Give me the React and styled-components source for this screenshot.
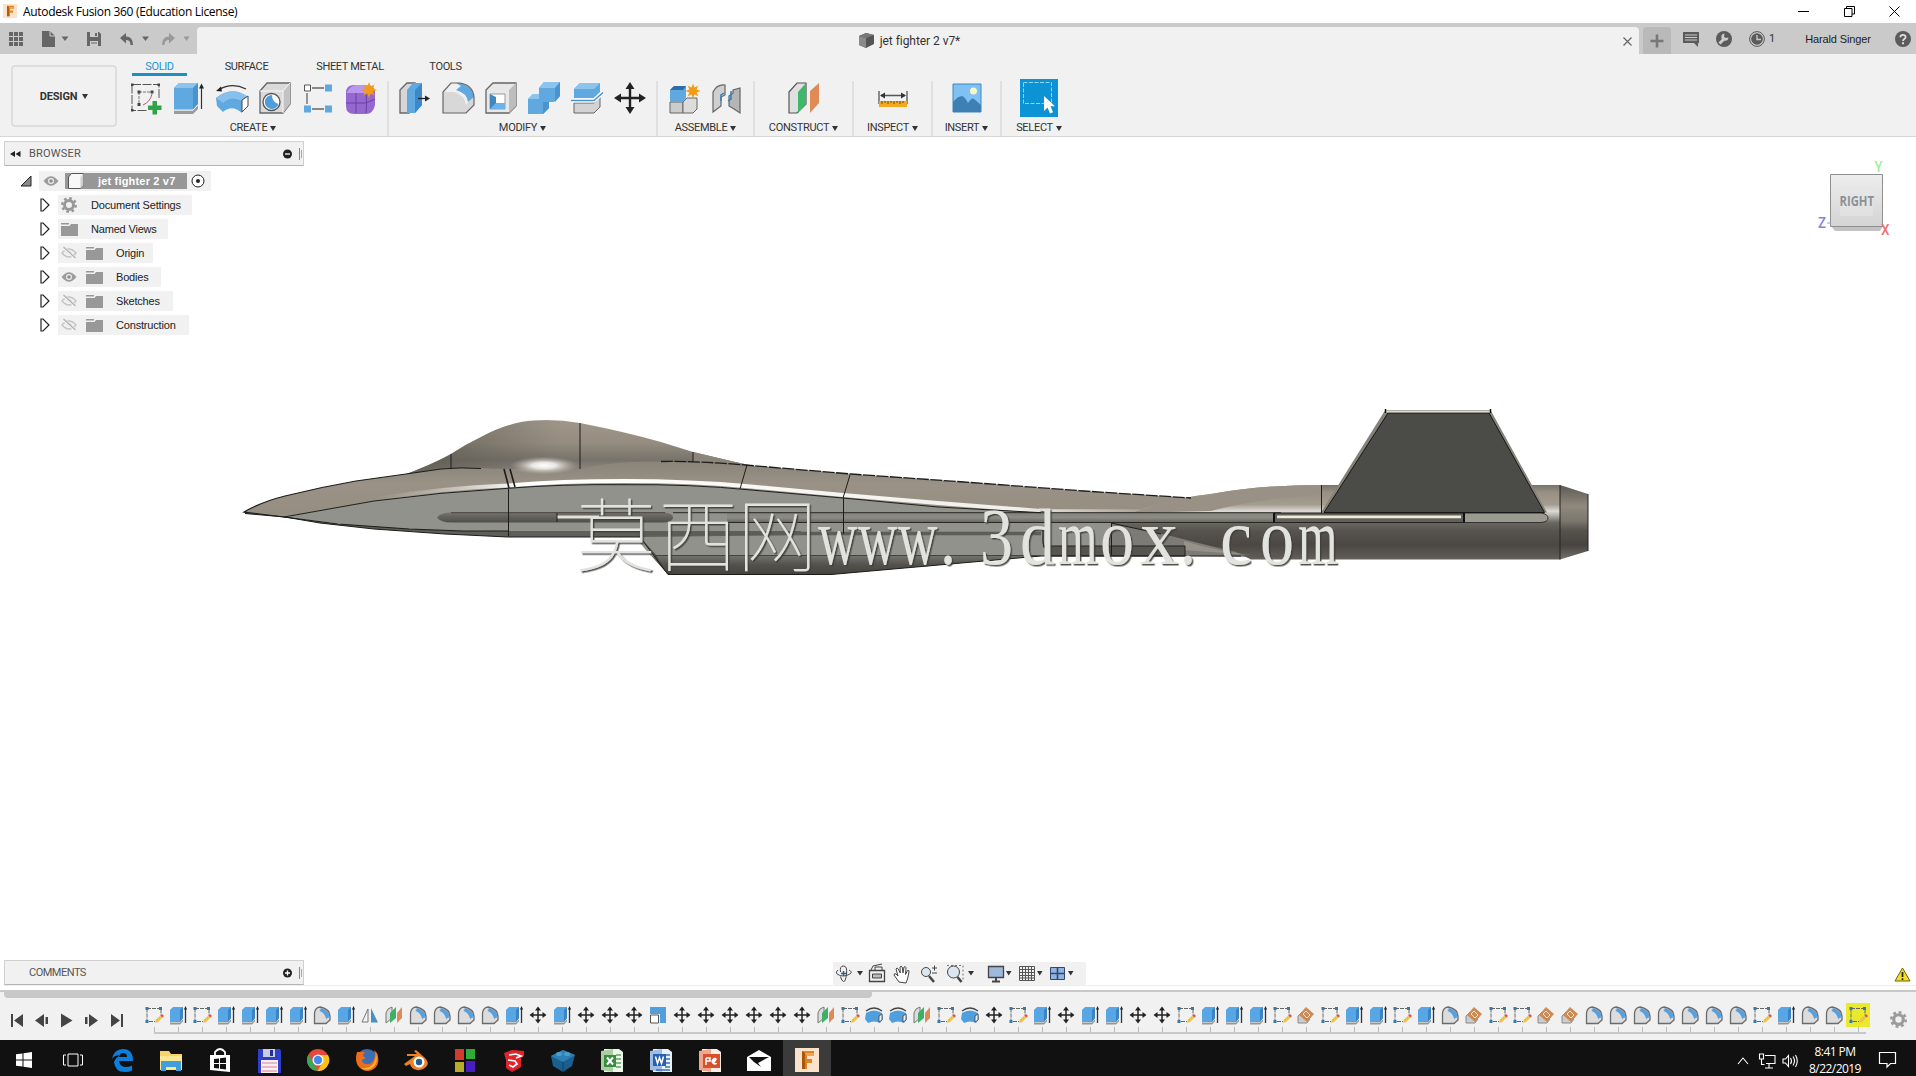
import React from 'react';
import styled, { createGlobalStyle } from 'styled-components';

const GlobalStyle = createGlobalStyle`
  * {
    box-sizing: border-box;
  }
  body {
    margin: 0;
    background: #fff;
    overflow: hidden;
    font-family: Roboto, 'Liberation Sans', sans-serif;
    font-size: 11px;
    color: #333;
  }
  svg {
    display: block;
    flex: none;
    overflow: visible;
  }
`;

/* ---------- ribbon icons, 32 x 32 ---------- */

const Burst = ({ x, y, s = 1 }) => (
  <path
    transform={`translate(${x} ${y}) scale(${s})`}
    d="M0-8 1.6-3.6 5.6-5.6 3.8-1.6 8 0 3.8 1.6 5.6 5.6 1.6 3.6 0 8-1.6 3.6-5.6 5.6-3.8 1.6-8 0-3.8-1.6-5.6-5.6-1.6-3.6Z"
    fill="#f49c14"
  />
);

const ribbonIcons = {
  sketch: (
    <>
      <path d="M2 2.5h27v14M2 2.5v26h16" fill="none" stroke="#555" strokeDasharray="9 1.5" />
      <path d="M9 10h11M9 10v12" fill="none" stroke="#777" strokeDasharray="3 1" />
      <path d="M22 12q-2 8-9 11" fill="none" stroke="#b05c70" />
      <path
        d="M1 1.5h2.5v2.5H1zM27.5 1.5h2.5v2.5h-2.5zM1 27h2.5v2.5H1zM7.5 8.500h3v3h-3zM20.5 8.500h3v3h-3zM7.500 21h3v3h-3z"
        fill="#444"
      />
      <path d="M22.500 19h4.500v4.500h4.500V28H27v4.500h-4.500V28H18v-4.500h4.500z" fill="#2fa347" />
    </>
  ),
  extrude: (
    <>
      <path d="M1 6 6 1h19v21l-5 6H1z" fill="#5fa8e0" />
      <path d="M1 6 6 1h19l-5 5z" fill="#8cc4ee" />
      <path d="M20 6l5-5v21l-5 6z" fill="#4b93cf" />
      <path d="M1 28.500h19l5-5.500v4l-5 5H1z" fill="#9a9a9f" />
      <path d="M1 28h19l5-5.500" fill="none" stroke="#f4f4f4" />
      <path d="M28.500 5v22" stroke="#333" strokeWidth="1.200" />
      <path d="M28.500 1.500l2.500 5h-5z" fill="#222" />
    </>
  ),
  revolve: (
    <>
      <path d="M0 16Q16 3 32 15l-6 8v8Q16 22 7 30L1 24z" fill="#5fa8e0" />
      <path d="M0 16Q16 3 32 15l-6 4Q15 13 7 21z" fill="#86c0ed" />
      <path d="M26 18l6-4v10l-6 6z" fill="#fff" stroke="#444" />
      <path d="M3 7.500Q16 0 30 7" fill="none" stroke="#333" strokeWidth="1.300" />
      <path d="M0 9 5 4.500l1 5z" fill="#222" />
    </>
  ),
  hole: (
    <>
      <path d="M1 9 8 1h23v21l-7 9H1z" fill="#dadada" stroke="#666" strokeWidth="1.300" />
      <path d="M24 9l7-8v21l-7 9z" fill="#c3c3c3" />
      <path d="M1 9h23l7-8M24 9v22" fill="none" stroke="#f8f8f8" />
      <circle cx="12.500" cy="20" r="8.500" fill="#fff" stroke="#555" strokeWidth="1.300" />
      <path d="M13 13a7 7 0 1 0 6.500 9Q13 20 13 13" fill="#4f9ddb" />
    </>
  ),
  pattern: (
    <>
      <path d="M10 6h12M5 11v11M10 27h12" stroke="#666" strokeWidth="1.300" />
      <path d="M2.500 3h6v6h-6z" fill="#fff" stroke="#555" />
      <path d="M23 2.500h7v7h-7zM2 23.500h7v7H2zM23 23.500h7v7h-7z" fill="#5fa8e0" />
    </>
  ),
  form: (
    <>
      <path d="M1 11q0-8 8-8h13q8 0 8 8v12q-2 9-9 9H9q-8 0-8-8z" fill="#9468cf" />
      <path d="M2 10q3-6 9-7h13l-3 8H2z" fill="#bb95ee" />
      <path d="M11 11v20M1 21h20M21 11q1 12 0 20M21 21l9-4" fill="none" stroke="#6a41a6" />
      <Burst x={24} y={8} />
    </>
  ),
  pressPull: (
    <>
      <path d="M1 8 8 1h8v23l-6 7H1z" fill="#d6d6d6" stroke="#666" strokeWidth="1.300" />
      <path d="M8 8l6-7h9v22l-7 8H8z" fill="#5fa8e0" />
      <path d="M16 8l7-7v22l-7 8z" fill="#3d88c8" />
      <path d="M19 16.500h8" stroke="#222" strokeWidth="1.300" />
      <path d="M31 16.500l-5-3v6z" fill="#222" />
    </>
  ),
  fillet: (
    <>
      <path d="M1 10 9 1h9q13 2 14 14v8l-8 8H1z" fill="#d8d8d8" />
      <path d="M24 23q-1-10-12-13H1l8-9h7q14 3 15 13z" fill="#f0f0f0" />
      <path d="M14 1h4q12 2 14 14l-6 5q-1-9-12-12l5-4z" fill="#5fa8e0" />
      <path d="M1 31V10l8-9h9q13 2 14 14v8l-8 8z" fill="none" stroke="#666" strokeWidth="1.200" />
    </>
  ),
  shell: (
    <>
      <path d="M1 8 8 1h23v23l-7 7H1z" fill="#e8e8e8" stroke="#666" strokeWidth="1.300" />
      <path d="M24 8l7-7v23l-7 7z" fill="#bdbdbd" />
      <path d="M5 12h15v15H5z" fill="#fff" stroke="#999" />
      <path d="M5 12l6 3v6h9v6H5z" fill="#4287bd" />
      <path d="M5 27l6-6h9v6z" fill="#6db2e8" />
    </>
  ),
  combine: (
    <>
      <path d="M0 17l5-5h6V6l5-6h16v14l-6 6h-5v6l-6 6H0z" fill="#5fa8e0" />
      <path d="M0 17l5-5h6v5zM11 6l5-6h16l-5 6z" fill="#8cc4ee" />
      <path d="M27 6l5-6v14l-5 6z" fill="#4b93cf" />
      <path d="M15 20h6v6l-6 6z" fill="#4b93cf" />
    </>
  ),
  split: (
    <>
      <path d="M3 7l6-6h20v9l-6 6H3z" fill="#5fa8e0" />
      <path d="M3 7l6-6h20l-6 6z" fill="#8cc4ee" />
      <path d="M3 21h20l6-6v10l-6 6H3z" fill="#d3d3d3" stroke="#666" />
      <path d="M0 18.500h23l9-8" fill="none" stroke="#fff" strokeWidth="4" />
      <path d="M0 18.500h23l9-8" fill="none" stroke="#4a92cc" strokeWidth="1.500" />
    </>
  ),
  move: (
    <>
      <path d="M16 5v22M5 16h22" stroke="#222" strokeWidth="2.400" />
      <path d="M16 0l4.500 7h-9zM16 32l4.500-7h-9zM0 16l7-4.500v9zM32 16l-7-4.500v9z" fill="#222" />
    </>
  ),
  component: (
    <>
      <path d="M2 20h13v11H2z" fill="#ccc" stroke="#666" />
      <path d="M15 20l4-4h10v11l-4 4H15z" fill="#dcdcdc" stroke="#666" />
      <path d="M2 8l4-4h12v12l-3 4H2z" fill="#5fa8e0" />
      <path d="M2 8l4-4h12l-3 4z" fill="#2f6fa6" />
      <Burst x={25} y={9} s={0.95} />
    </>
  ),
  joint: (
    <>
      <path d="M2 10q4-8 12-7v10l-4 2v9l-8 6z" fill="#cfcfcf" stroke="#666" strokeWidth="1.200" />
      <path d="M18 14l4-3V8l7-2v25l-6-4-5-3z" fill="#b5b5b5" stroke="#666" strokeWidth="1.200" />
      <path d="M10 19v-6l3-2M20 9v8l-3 2" fill="none" stroke="#2f7fc2" strokeWidth="1.500" />
    </>
  ),
  construct: (
    <>
      <path d="M1 10 9 1h9v21l-9 9H1z" fill="#e0e0e0" stroke="#555" strokeWidth="1.200" />
      <path d="M10 10l8-9v21l-8 9z" fill="#3fb869" />
      <path d="M22 9l9-8v20l-9 10z" fill="#e08a55" />
    </>
  ),
  inspect: (
    <>
      <path d="M2 9v13M30 9v13M4 13.500h24" stroke="#555" strokeWidth="1.300" />
      <path d="M3 13.500l5-3v6zM29 13.500l-5-3v6z" fill="#333" />
      <path d="M2 19h28v6H2z" fill="#f2aa1c" />
      <path d="M5 19v3M8 19v2M11 19v3M14 19v2M17 19v3M20 19v2M23 19v3M26 19v2" stroke="#6b4a0a" />
    </>
  ),
  insert: (
    <>
      <path d="M2 2h28v28H2z" fill="#7fc1f3" stroke="#3e88c4" />
      <path d="M2 20q5-6 9-6 3 1 6 7 4-6 6-4l7 6v7H2z" fill="#3e7fb4" />
      <circle cx="22.500" cy="9" r="3.500" fill="#fbf6c8" />
    </>
  ),
};

const RibbonIcon = ({ name }) => (
  <svg width="32" height="32" viewBox="0 0 32 32">
    {ribbonIcons[name]}
  </svg>
);

/* ---------- timeline icons, 20 x 20 ---------- */

const timelineIcons = {
  sketch: (
    <>
      <path d="M3 3.500h14v7M3 3.500v13h8" fill="none" stroke="#666" strokeDasharray="4 1" />
      <path d="M1.500 2h3v3h-3zM15 2h3v3h-3zM1.500 15h3v3h-3z" fill="#3a76a8" />
      <path d="M11 18l1-3.500 5-4.500 2 2-5 5z" fill="#f2bf4b" />
      <path d="M16.500 10.500l1.500-1.500 2 2-1.500 1.500z" fill="#d9534f" />
    </>
  ),
  extrude: (
    <>
      <path d="M2 5l3-3h10v11l-3 4H2z" fill="#58a6e4" />
      <path d="M12 5l3-3v11l-3 4z" fill="#3b84c4" />
      <path d="M2 17.500h10l3-3v2l-3 3H2z" fill="#999" />
      <path d="M17.500 3v15" stroke="#333" strokeWidth="1.300" />
      <path d="M17.500 1l1.500 3.500h-3z" fill="#222" />
    </>
  ),
  fillet: (
    <>
      <path d="M2.500 8q1-6 6-6 9 2 9.500 9v4l-4 3.500H2.500z" fill="#dcdcdc" stroke="#6b6b6b" strokeWidth="1.300" />
      <path d="M9 3q8 2 8.500 9l-3.500 2q-1-6-6.500-8z" fill="#58a0dc" />
    </>
  ),
  mirror: (
    <>
      <path d="M8 4v13H2z" fill="#f3f3f3" stroke="#777" />
      <path d="M11 3l7 14.500h-7z" fill="#4a8fc6" />
    </>
  ),
  plane: (
    <>
      <path d="M2 18V8q1-5 6-6v11z" fill="#ddd" stroke="#777" />
      <path d="M6 18V8l6-6v11z" fill="#3fae66" />
      <path d="M13 18V8l5-6v11z" fill="#de8a5a" />
    </>
  ),
  revolve: (
    <>
      <path d="M2 8q8-5 16 0l1 6-3 4q-6-3-12 0l-3-4z" fill="#4f9fde" />
      <path d="M2 6q8-6 16 0" fill="none" stroke="#444" strokeWidth="1.300" />
      <path d="M15 11l3-2v6l-3 2z" fill="#fff" stroke="#555" />
    </>
  ),
  move: (
    <>
      <path d="M10 4v12M4 10h12" stroke="#222" strokeWidth="1.500" />
      <path d="M10 1.500l3 4H7zM10 18.500l3-4H7zM1.500 10l4-3v6zM18.500 10l-4-3v6z" fill="#222" />
    </>
  ),
  scale: (
    <>
      <path d="M2 2h16v16h-6V9H2z" fill="#4f9fde" />
      <path d="M2.500 10h8v8h-8z" fill="#fff" stroke="#555" />
    </>
  ),
  thread: (
    <>
      <path d="M2 18v-7l4-4 8 7-3 4z" fill="#ccc" stroke="#888" />
      <path d="M3 10l7-8 8 7-7 8z" fill="#cf8a54" />
      <path d="M7 9l3-3 4 4-3 3z" fill="none" stroke="#fbe5cf" />
    </>
  ),
};

const TimelineGlyph = ({ name }) => (
  <svg width="20" height="20" viewBox="0 0 20 20">
    {timelineIcons[name]}
  </svg>
);

const S = 'sketch';
const E = 'extrude';
const F = 'fillet';
const M = 'move';
const P = 'plane';
const R = 'revolve';
const T = 'thread';

const history = [
  S, E, S, E, E, E, E, F, E, 'mirror', P, F, F, F, F, E, M, E, M, M, M,
  'scale', M, M, M, M, M, M, P, S, R, R, P, S, R, M, S, E, M, E, E, M, M,
  S, E, E, E, S, T, S, E, E, S, E, F, T, S, S, T, T, F, F, F, F, F, F, F,
  S, E, F, F, S,
];

const ribbonGroups = [
  { label: 'CREATE', width: 270, icons: ['sketch', 'extrude', 'revolve', 'hole', 'pattern', 'form'] },
  { label: 'MODIFY', width: 269, icons: ['pressPull', 'fillet', 'shell', 'combine', 'split', 'move'] },
  { label: 'ASSEMBLE', width: 97, icons: ['component', 'joint'] },
  { label: 'CONSTRUCT', width: 99, icons: ['construct'] },
  { label: 'INSPECT', width: 79, icons: ['inspect'] },
  { label: 'INSERT', width: 69, icons: ['insert'] },
  { label: 'SELECT', width: 74, icons: [] },
];

const treeItems = [
  { label: 'Document Settings', icon: 'gear', width: 134 },
  { label: 'Named Views', icon: 'folder', width: 110 },
  { label: 'Origin', icon: 'folder', eye: 'off', width: 95 },
  { label: 'Bodies', icon: 'folder', eye: 'on', width: 103 },
  { label: 'Sketches', icon: 'folder', eye: 'off', width: 115 },
  { label: 'Construction', icon: 'folder', eye: 'off', width: 131 },
];

/* ---------- small glyphs ---------- */

const FusionLogo = ({ size }) => (
  <svg width={size} height={size} viewBox="0 0 24 24">
    <path d="M0 0h24v24H0z" fill="#fbe3cb" />
    <path d="M7 3h12v5h-7v3h5v4h-5v6H7z" fill="#dd8425" />
    <path d="M7 3l3 2v16H7z" fill="#a9570f" />
    <path d="M10 5h9v3h-7z" fill="#f2a44d" />
  </svg>
);

const Gear = ({ size, color }) => (
  <svg width={size} height={size} viewBox="-8 -8 16 16">
    <circle r="4.500" fill="none" stroke={color} strokeWidth="3" />
    <circle r="6.800" fill="none" stroke={color} strokeWidth="2.400" strokeDasharray="2.670 2.670" />
  </svg>
);

const Eye = ({ off }) => (
  <svg width="16" height="12" viewBox="0 0 16 12">
    {off ? (
      <>
        <path d="M1 6q7-8 14 0-7 8-14 0z" fill="none" stroke="#c4c4c4" strokeWidth="1.500" />
        <path d="M6 6q2-3 4 0" fill="none" stroke="#bbb" strokeWidth="1.500" />
        <path d="M2 0l12 11" stroke="#f1f1f1" strokeWidth="3" />
        <path d="M2.500 0l12 11" stroke="#b0b0b0" strokeWidth="1.200" />
      </>
    ) : (
      <>
        <path d="M.5 6q7.500-9.500 15 0-7.500 9.500-15 0z" fill="#9c9c9c" />
        <circle cx="8" cy="6" r="3" fill="#eee" />
        <circle cx="8" cy="6" r="1.800" fill="#8c8c8c" />
      </>
    )}
  </svg>
);

const Folder = () => (
  <svg width="17" height="13" viewBox="0 0 17 13">
    <path d="M0 0h8v1.500H0zM0 3h8.500L10 1h7v12H0z" fill="#989898" />
  </svg>
);

/* ---------- jet ---------- */

const cells = ['w', 'w', 'w', '.', '3', 'd', 'm', 'o', 'x', '.', 'c', 'o', 'm'];
const cellWidth = { '.': 16, 3: 33, d: 35, o: 34, c: 32, x: 38, w: 39.500, m: 39.500 };

const Watermark = () => (
  <g fill="#e2e2de" filter="url(#emboss)">
    <g fontFamily="'Noto Sans CJK SC', sans-serif" fontWeight="100" fontSize="80">
      <text x="575" y="565">莫</text>
      <text x="657" y="565">西</text>
      <text x="736" y="565">网</text>
    </g>
    <g fontFamily="'Liberation Serif', serif" fontSize="80">
      {cells.map((c, i) => (
        <text
          key={i}
          x={818 + i * 40 + (c === 'w' || c === 'm' ? -1 : 1)}
          y="564"
          textLength={cellWidth[c]}
          lengthAdjust="spacingAndGlyphs"
        >
          {c}
        </text>
      ))}
    </g>
  </g>
);

const stops = (list) => list.map(([o, c]) => <stop key={o} offset={o} stopColor={c} />);

const Jet = () => (
  <JetCanvas viewBox="230 390 1380 200" width="1380" height="200">
    <defs>
      <filter id="emboss" x="-2%" y="-10%" width="104%" height="125%">
        <feDropShadow dx="1.500" dy="1.500" stdDeviation="0.300" floodColor="#3c3c3a" floodOpacity=".9" />
      </filter>
      <linearGradient id="top" x1="0" y1="465" x2="0" y2="512" gradientUnits="userSpaceOnUse">
        {stops([[0, '#8b857a'], [0.4, '#9a9286'], [1, '#958e81']])}
      </linearGradient>
      <linearGradient id="canopy" x1="0" y1="420" x2="0" y2="470" gradientUnits="userSpaceOnUse">
        {stops([[0, '#a0978a'], [0.45, '#958d80'], [0.8, '#77736b'], [1, '#8c877e']])}
      </linearGradient>
      <linearGradient id="canopyEdge" x1="400" y1="0" x2="560" y2="0" gradientUnits="userSpaceOnUse">
        <stop offset="0" stopColor="#59564f" stopOpacity=".8" />
        <stop offset="1" stopColor="#59564f" stopOpacity="0" />
      </linearGradient>
      <radialGradient id="glow">
        <stop offset="0" stopColor="#fff" />
        <stop offset=".35" stopColor="#f4f3f0" stopOpacity=".9" />
        <stop offset="1" stopColor="#bbb5a8" stopOpacity="0" />
      </radialGradient>
      <linearGradient id="belly" x1="0" y1="555" x2="0" y2="575" gradientUnits="userSpaceOnUse">
        {stops([[0, '#77756f'], [0.5, '#53514b'], [1, '#45433e']])}
      </linearGradient>
      <linearGradient id="tube" x1="0" y1="485" x2="0" y2="560" gradientUnits="userSpaceOnUse">
        {stops([[0, '#78746b'], [0.1, '#989083'], [0.26, '#a39c90'], [0.35, '#dddbd6'], [0.42, '#aaa7a0'], [0.5, '#6a6761'], [0.62, '#56534e'], [0.8, '#4b4843'], [0.95, '#5c5954'], [1, '#67645e']])}
      </linearGradient>
      <linearGradient id="nozzle" x1="0" y1="485" x2="0" y2="560" gradientUnits="userSpaceOnUse">
        {stops([[0, '#5d5a53'], [0.28, '#8f897d'], [0.48, '#7b776e'], [0.6, '#57544e'], [0.8, '#464440'], [1, '#77736b']])}
      </linearGradient>
      <linearGradient id="wing" x1="0" y1="512" x2="0" y2="523" gradientUnits="userSpaceOnUse">
        {stops([[0, '#84837c'], [0.5, '#8c8b84'], [1, '#62615b']])}
      </linearGradient>
      <linearGradient id="rail" x1="0" y1="512" x2="0" y2="523" gradientUnits="userSpaceOnUse">
        {stops([[0, '#78776f'], [0.4, '#65645d'], [1, '#4d4c47']])}
      </linearGradient>
      <linearGradient id="gleam" x1="375" y1="0" x2="1180" y2="0" gradientUnits="userSpaceOnUse">
        <stop offset="0" stopColor="#d8d5cd" stopOpacity="0" />
        <stop offset=".18" stopColor="#fff" />
        <stop offset=".8" stopColor="#f0efeb" />
        <stop offset="1" stopColor="#e0ddd6" stopOpacity="0" />
      </linearGradient>
    </defs>

    {/* canopy */}
    <path
      d="M400 476Q430 465 450 454 465 444 480 437 508 422 533 420.500 556 419 579 423 625 432 660 442L692 452 730 461 750 465.500 750 480 400 480z"
      fill="url(#canopy)"
    />
    <path d="M400 476Q430 465 450 454 465 444 480 437 508 422 533 420.500L560 421V478H400z" fill="url(#canopyEdge)" />
    <path d="M692 452l38 9 20 4.500V470l-58-3z" fill="#8b857b" />

    {/* upper fuselage */}
    <path
      d="M243 512Q260 502 284 496 320 487 355 481L405 474 440 469 Q470 467 500 469L579 470 Q600 463 630 462 680 461 750 465.500L850 474 963 482 1083 491 1190 498 1190 513H1040L937 507 842 498 750 490Q690 484 623 484.700 560 484 507 488.300 440 492 373 501L283 517z"
      fill="url(#top)"
    />
    <ellipse cx="543" cy="465.500" rx="34" ry="9" fill="url(#glow)" />
    <path d="M375 499Q440 488 507 485.500 560 481 623 481 690 481 750 486.500L842 495 937 503 1040 511 1180 511.500" fill="none" stroke="url(#gleam)" strokeWidth="4" />

    {/* side panel */}
    <path
      d="M283 517L373 501Q440 492 507 488.300 560 484 623 484.700 690 484 750 490L842 498 937 507 1040 512.700H1190V556H1040L983 561 830 574.500H667L639 543V537H507L373 528z"
      fill="#92928c"
    />
    <path d="M243 512L283 517 337 524 408 529 462 531H800V537H507L444 534 373 529 319 523 284 517 244 513.500z" fill="#5f5e58" />
    <path d="M639 543L667 574.500H830L983 561 1040 556H650z" fill="url(#belly)" />
    <path d="M639 537l12 18H1040v-20H800z" fill="#92928c" />
    <path d="M639 537L655 555 667 574.500z" fill="#494843" />
    <path d="M634 533.500H1040" stroke="#5d5c57" strokeWidth="3.500" />

    {/* engine body */}
    <path d="M1110 523H1260V557L1183 556H1110z" fill="#7d7b75" />
    <path d="M1130 513Q1170 498 1210 494 1260 485 1320 485H1559V559.500H1250L1235 552Q1205 545 1170 536 1140 529 1110 523z" fill="url(#tube)" />
    <path d="M1130 513Q1170 498 1210 494 1260 485 1320 485V494Q1250 500 1210 511z" fill="#999185" />
    <path d="M1183 541Q1220 552 1250 555L1183 550z" fill="#96928a" />
    <path d="M1042 546H1184V556H1050z" fill="#56554f" stroke="#222" />
    <path d="M1042 527v15q0 5 6 5" fill="none" stroke="#222" strokeWidth="1.300" />
    <path d="M1559 485l28 9v57l-28 8.500z" fill="url(#nozzle)" />
    <path d="M1559 485v74.500M1587 494v57" stroke="#222" />

    {/* wing strip */}
    <path d="M726 513H1280V523H726z" fill="url(#wing)" />
    <path d="M436 517.500q4-5 14-5H664q8 1 8 5t-8 5H450q-10 0-14-5z" fill="url(#rail)" />
    <path d="M672 512.700H1280M726 522.500H1280" stroke="#282825" />
    <path d="M450 512.700H664" stroke="#44433e" />
    <path d="M556 515.500h42v3h-42z" fill="#e4e2d4" />
    <path d="M556 513v9" stroke="#222" />
    <path d="M1460 513h80q7 1 7 5t-7 4.500h-80z" fill="#9a9a91" stroke="#333" />
    <path d="M1273 513h190v9.500h-190z" fill="#62605a" stroke="#222" />
    <path d="M1276 515.500h184v2.800h-184z" fill="#eeebd9" />
    <path d="M1273 513v9.500M1463 513v9.500" stroke="#111" strokeWidth="2" />

    {/* tail fin */}
    <path d="M1383 412L1385 410H1489.500L1546 512.500H1320z" fill="#85827a" />
    <path d="M1387 413H1488L1543.500 512.500H1323z" fill="#4b4b47" stroke="#171715" />
    <path d="M1385 411.500H1489" stroke="#dcdac9" strokeWidth="2" />
    <path d="M1384.500 409v4M1489.500 409v4" stroke="#111" strokeWidth="1.500" />

    {/* edges */}
    <g fill="none" stroke="#1c1c1a">
      <path d="M283 517L373 501Q440 492 507 488.300 560 484 623 484.700 690 484 750 490L842 498 937 507 1040 512.700" />
      <path d="M405 474L355 481Q320 487 284 496 260 502 243 512L283 517 337 524 408 529 462 531H507" strokeWidth="1.200" />
      <path d="M405 474L440 469Q460 467 480 468.500" />
      <path d="M244 513.500L284 517 319 523 373 529 444 534 507 537H639L667 574.500H830L983 561 1040 556H1240" />
      <path d="M660 461.500Q700 461 750 465.500L850 474 963 482 1083 491 1190 498" strokeDasharray="12 1.500" strokeWidth="1.300" />
      <path d="M450 454v15M579 423v46M692 452v10M507.500 489v47M842.500 498v36M1110.500 523v32M1320.500 485v28M746 465l-7 24M849 475l-7 23" />
      <path d="M503 469l5 19M509 469l5 18" strokeWidth="1.600" />
      <path d="M652 555.500H1040" stroke="#44433f" />
      <path d="M1110 523l50 11" />
    </g>

    <Watermark />
  </JetCanvas>
);

/* ---------- taskbar icons, 28 x 28 ---------- */

const taskIcons = [
  <g key="edge">
    <path d="M4 13Q6 3 15 3q10 0 10 12H11q1 6 7 6 3 0 6-1.500v5Q21 26 17 26 7 26 6 16q2-5 7-7-7 0-9 4zM11 11h8q0-4-4-4-3 0-4 4z" fill="#0c7fdc" fillRule="evenodd" />
  </g>,
  <g key="files">
    <path d="M3 5h9l2 3h11v16H3z" fill="#f6d46c" />
    <path d="M3 10h22v14H3z" fill="#fbe694" />
    <path d="M4 15h20v10h-5v-4H9v4H4z" fill="#3f9fdc" />
  </g>,
  <g key="store">
    <path d="M9 9V6q5-6 10 0v3" fill="none" stroke="#fff" strokeWidth="1.800" />
    <path d="M4 9h20v17l-20-2z" fill="#fff" />
    <path d="M8 13l5-.500v4.500H8zM14 12.300l6-.700V17h-6zM8 18h5v4.500L8 22zM14 18h6v5.500l-6-.700z" fill="#111" />
  </g>,
  <g key="floppy">
    <path d="M3 3h22l1 2v22H3z" fill="#2e3fc9" />
    <path d="M8 3h12v8H8z" fill="#c9cfe0" />
    <path d="M15 4h3v6h-3z" fill="#23309b" />
    <path d="M6 14h17v13H6z" fill="#fbeff1" />
    <path d="M7 17h15M7 21h15M7 25h15" stroke="#dd8094" />
  </g>,
  <g key="chrome">
    <circle cx="14" cy="14" r="11" fill="#e6493a" />
    <path d="M4.500 8.500L14 25A11 11 0 0 1 4.500 8.500z" fill="#3aa757" />
    <path d="M14 9h10a11 11 0 0 1-10.500 16L18 17z" fill="#fbc116" />
    <circle cx="14" cy="14" r="5.500" fill="#fff" />
    <circle cx="14" cy="14" r="4.200" fill="#4688f1" />
  </g>,
  <g key="firefox">
    <circle cx="14" cy="13.500" r="10.500" fill="#3b6fb5" />
    <path d="M4 6q-3 9 2 15 6 6 13 3 8-4 6-14-1-4-4-6 2 5 0 9-2 6-8 5-4-1-4-4l4-2q-3-1-3-3l2-3q-5 0-8 0z" fill="#ec6d1c" />
    <path d="M23 8q3 9-4 14-6 3-11 0 9 1 13-5 2-4 2-9z" fill="#fbb733" />
  </g>,
  <g key="blender">
    <path d="M2 18l11-8H5V8h10l-3-3 2-1 9 8q5 5 1 9-4 4-9 3-6-1-7-6l-4 2z" fill="#ee8123" />
    <circle cx="17" cy="16" r="5.500" fill="#fff" />
    <circle cx="17" cy="16" r="3.200" fill="#245b96" />
  </g>,
  <g key="tiles">
    <path d="M4 3h9v11H4z" fill="#d43b30" />
    <path d="M15 3h9v10h-9z" fill="#2fac38" />
    <path d="M4 16h9v10H4z" fill="#b9ab2b" />
    <path d="M15 15h9v11h-9z" fill="#4a1cc4" />
  </g>,
  <g key="sketchup">
    <path d="M4 7l8-3 12 1v5l-3 2v9l-9 5-6-4v-8z" fill="#e0242b" />
    <path d="M9 9l7-1 5 2-5 2M8 14l7 1 2 3-4 3-4-2" fill="none" stroke="#fff" strokeWidth="1.700" />
  </g>,
  <g key="bricks">
    <path d="M2 10l12-6 12 5-3 11-9 6-10-6z" fill="#1c5f8f" />
    <path d="M2 10l12-6 12 5-12 7z" fill="#2d80b5" />
    <path d="M14 16v10" stroke="#0f3f63" />
    <ellipse cx="10" cy="8" rx="3" ry="2" fill="#4b9dcc" />
    <ellipse cx="18" cy="8" rx="3" ry="2" fill="#4b9dcc" />
  </g>,
  <g key="excel">
    <path d="M6 3h15l4 3v20H6z" fill="#eef5ea" />
    <path d="M3 5l12-2v23L3 24z" fill="#a9cf9f" />
    <path d="M18 9h5M18 13h5M18 17h5M18 21h5" stroke="#5ea35f" strokeWidth="1.500" />
    <path d="M6 9h12v12H6z" fill="#3c8b43" />
    <path d="M9 11.500l6 7M15 11.500l-6 7" stroke="#fff" strokeWidth="2" />
  </g>,
  <g key="word">
    <path d="M6 3h15l4 3v20H6z" fill="#eaf1fa" />
    <path d="M3 5l12-2v23L3 24z" fill="#9dbce6" />
    <path d="M18 9h5M18 13h5M18 17h5M18 21h5M9 24h14" stroke="#3b70bb" strokeWidth="1.500" />
    <path d="M6 8h13v12H6z" fill="#2a5fae" />
    <path d="M8.500 10.500l2 7 2-6 2 6 2-7" fill="none" stroke="#fff" strokeWidth="1.500" />
  </g>,
  <g key="ppt">
    <path d="M6 3h15l4 3v20H6z" fill="#fbeee8" />
    <path d="M3 5l12-2v23L3 24z" fill="#f0a68c" />
    <path d="M7 8h17v14H7z" fill="#d6502c" />
    <path d="M10 12v7M10 12h4v3h-4" fill="none" stroke="#fff" strokeWidth="1.500" />
    <path d="M21 13a3.200 3.200 0 1 0 .500 4h-3z" fill="#fff" />
  </g>,
  <g key="mail">
    <path d="M2 11L14 4l12 7v14H2z" fill="#fff" />
    <path d="M4 11h20l-11 6 3 4-7-5z" fill="#111" />
  </g>,
];

/* ---------- page ---------- */

const App = () => (
  <Window>
    <GlobalStyle />
    <TitleBar>
      <FusionLogo size={14} />
      <AppTitle>Autodesk Fusion 360 (Education License)</AppTitle>
      <WindowButtons>
        <svg width="11" height="11" viewBox="0 0 11 11"><path d="M0 5.500h11" stroke="#000" /></svg>
        <svg width="11" height="11" viewBox="0 0 11 11">
          <path d="M.5 2.500h7.500v8H.5zM2.500 2.500V.5h8v7.500H8" fill="none" stroke="#000" />
        </svg>
        <svg width="11" height="11" viewBox="0 0 11 11"><path d="M.5.5l10 10M10.500.5l-10 10" stroke="#000" /></svg>
      </WindowButtons>
    </TitleBar>

    <TabStrip>
      <QuickAccess>
        <svg width="197" height="31" viewBox="0 23 197 31" fill="#666">
          {[9, 14, 19].map((x) =>
            [32, 37, 42].map((y) => <path key={`${x}${y}`} d={`M${x} ${y}h4v4h-4z`} />)
          )}
          <path d="M42 31h8l5 5v11H42z" />
          <path d="M50 31v5h5" fill="none" stroke="#ccc" />
          <path d="M61.500 36.500h7l-3.500 4.500zM142 36.500h7l-3.500 4.500z" />
          <path d="M183.500 36.500h6l-3 4.500z" fill="#999" />
          <path d="M87 32h12l2 2v12H87z" />
          <path d="M90 32h8v5h-8zM90 41h8v5h-8z" fill="#ccc" />
          <path d="M95 33h2v3h-2zM91 42.500h6v1h-6z" />
          <path d="M120 38l6-5v3.500q7 0 7 8.500h-2.500q0-5-4.500-5v3.500z" />
          <path d="M175 38l-6-5v3.500q-7 0-7 8.500h2.500q0-5 4.500-5v3.500z" fill="#999" />
        </svg>
      </QuickAccess>
      <DocumentTab>
        <svg width="17" height="16" viewBox="0 0 17 16">
          <path d="M1 3l7-3 8 2v9l-8 4-7-3z" fill="#555" />
          <path d="M1 3l7 2v10l-7-3z" fill="#8a8a8a" />
          <path d="M1 3l7-3 8 2-8 3z" fill="#777" />
        </svg>
        <span>jet fighter 2 v7*</span>
        <CloseMark width="9" height="9" viewBox="0 0 9 9">
          <path d="M.5.500l8 8M8.500.500l-8 8" stroke="#666" strokeWidth="1.200" />
        </CloseMark>
      </DocumentTab>
      <NewTab>
        <svg width="14" height="14" viewBox="0 0 14 14"><path d="M7 .500v13M.500 7h13" stroke="#777" strokeWidth="2.600" /></svg>
      </NewTab>
      <AccountArea>
        <svg width="17" height="16" viewBox="0 0 17 16">
          <path d="M0 1h16v11h-1v4l-4-4H0z" fill="#5b5b5b" />
          <path d="M2 4h12M2 6.500h12M2 9h12" stroke="#ccc" />
        </svg>
        <svg width="16" height="16" viewBox="0 0 16 16">
          <circle cx="8" cy="8" r="8" fill="#5b5b5b" />
          <path d="M3.500 12.500L8 8" stroke="#ccc" strokeWidth="3" />
          <path d="M12.500 6.500a3.600 3.600 0 1 1-4-4L8 5.500l1.500 1.500z" fill="#ccc" />
        </svg>
        <JobStatus>
          <svg width="16" height="16" viewBox="0 0 16 16">
            <circle cx="8" cy="8" r="7.400" fill="none" stroke="#5b5b5b" strokeWidth="1" />
            <circle cx="8" cy="8" r="5.800" fill="#5b5b5b" />
            <path d="M8 4v4.500h4" fill="none" stroke="#ccc" strokeWidth="1.300" />
          </svg>
          1
        </JobStatus>
        <UserName>Harald Singer</UserName>
        <svg width="16" height="16" viewBox="0 0 16 16">
          <circle cx="8" cy="8" r="8" fill="#5b5b5b" />
          <path d="M5.300 6.300Q5.500 3.800 8 3.800t2.600 2.200Q10.600 7.300 9 8.200 8 8.800 8 10" fill="none" stroke="#ddd" strokeWidth="1.800" />
          <path d="M7 11.300h2v2H7z" fill="#ddd" />
        </svg>
      </AccountArea>
    </TabStrip>

    <Ribbon>
      <WorkspaceButton>
        DESIGN <Caret />
      </WorkspaceButton>
      <RibbonBody>
        <RibbonTabs>
          <RibbonTab $width={55} $active>SOLID</RibbonTab>
          <RibbonTab $width={119}>SURFACE</RibbonTab>
          <RibbonTab $width={88}>SHEET METAL</RibbonTab>
          <RibbonTab $width={103}>TOOLS</RibbonTab>
        </RibbonTabs>
        <RibbonGroups>
          {ribbonGroups.map((g) => (
            <RibbonGroup key={g.label} $width={g.width}>
              <IconRow>
                {g.icons.map((name) => (
                  <IconSlot key={name}>
                    <RibbonIcon name={name} />
                  </IconSlot>
                ))}
                {g.label === 'SELECT' && (
                  <SelectTile>
                    <svg width="38" height="38" viewBox="0 0 38 38">
                      <path d="M3.500 3.500h28v21h-28z" fill="none" stroke="#8fd6f7" strokeDasharray="4 1.500" />
                      <path d="M24 17v15l3.500-3.500 2.500 6 3-1.200-2.500-6H35z" fill="#fff" />
                    </svg>
                  </SelectTile>
                )}
              </IconRow>
              <GroupLabel>
                {g.label} <Caret />
              </GroupLabel>
            </RibbonGroup>
          ))}
        </RibbonGroups>
      </RibbonBody>
    </Ribbon>

    <Viewport>
      <Jet />
      <TopRow>
        <div>
          <PanelHeader>
            <svg width="11" height="6" viewBox="0 0 11 6"><path d="M5 0v6L0 3zM10.500 0v6l-5-3z" fill="#222" /></svg>
            <PanelTitle $spacing="0.2px">BROWSER</PanelTitle>
            <PanelKnob sign="-" />
          </PanelHeader>
          <Tree>
            <RootRow>
              <svg width="12" height="12" viewBox="0 0 12 12"><path d="M11 1v10H1z" fill="#8a8a8a" stroke="#222" /></svg>
              <RootBody>
                <Eye />
                <RootName>
                  <svg width="16" height="16" viewBox="0 0 16 16">
                    <path d="M.5 4l3-3.500h12V12l-3 3.500H.5z" fill="#f7f7f7" stroke="#555" />
                    <path d="M12.500 4l3-3.500V12l-3 3.500z" fill="#cfcfcf" />
                  </svg>
                  <span>jet fighter 2 v7</span>
                </RootName>
                <svg width="14" height="14" viewBox="0 0 14 14">
                  <circle cx="7" cy="7" r="6" fill="#fff" stroke="#222" />
                  <circle cx="7" cy="7" r="2" fill="#222" />
                </svg>
              </RootBody>
            </RootRow>
            {treeItems.map((item) => (
              <TreeRow key={item.label}>
                <svg width="10" height="14" viewBox="0 0 10 14">
                  <path d="M1 1h2l6 6-6 6H1z" fill="#fff" stroke="#222" strokeWidth="1.200" />
                </svg>
                <TreeItem $width={item.width}>
                  {item.eye && (
                    <EyeSlot>
                      <Eye off={item.eye === 'off'} />
                    </EyeSlot>
                  )}
                  <ItemIcon>{item.icon === 'gear' ? <Gear size={16} color="#989898" /> : <Folder />}</ItemIcon>
                  {item.label}
                </TreeItem>
              </TreeRow>
            ))}
          </Tree>
        </div>
        <ViewCube width="80" height="85" viewBox="1812 152 80 85">
          <defs>
            <linearGradient id="face" x1="0" y1="0" x2="0" y2="1">
              <stop offset="0" stopColor="#ededed" />
              <stop offset="1" stopColor="#d4d4d4" />
            </linearGradient>
          </defs>
          <path d="M1831 226h52l-3 5h-45z" fill="#c2c2c2" />
          <path d="M1830.500 174.500h52v52h-52z" fill="url(#face)" stroke="#8f8f8f" />
          <path d="M1840 185h33v31h-33z" fill="#e6e6e6" opacity=".6" />
          <path d="M1827 223h4" stroke="#9a9ae6" />
          <g fontFamily="'Open Sans', sans-serif" fontWeight="bold">
            <text x="1839.500" y="206" fontSize="15" textLength="34.500" lengthAdjust="spacingAndGlyphs" fill="#8a9299">RIGHT</text>
          </g>
          <g fontFamily="Roboto, sans-serif" fontSize="15" fontWeight="500">
            <text x="1874.500" y="171.500" textLength="8" lengthAdjust="spacingAndGlyphs" fill="#9bf09b">Y</text>
            <text x="1818" y="228" textLength="8" lengthAdjust="spacingAndGlyphs" fill="#8585e0">Z</text>
            <text x="1881" y="235" textLength="8.500" lengthAdjust="spacingAndGlyphs" fill="#f07070">X</text>
          </g>
        </ViewCube>
      </TopRow>

      <BottomRow>
        <PanelHeader>
          <PanelTitle $indent={19} $spacing="-0.5px">COMMENTS</PanelTitle>
          <PanelKnob sign="+" />
        </PanelHeader>
        <NavBar>
          <svg width="253" height="23" viewBox="833 962 253 23" fill="none" stroke="#444">
            <path d="M838 970q-3 2-1 4 6 4 13 0 3-2-1-4" stroke="#555" />
            <path d="M840.500 972q-1-6 3-6t3 8-3 7.500-3-5" />
            <path d="M841 973.500h5M843.500 971v5" stroke="#2a5f9e" strokeWidth="1.500" />
            <path d="M869.500 970.500h15v11h-15z" strokeWidth="1.300" />
            <path d="M872.500 974h9v4h-9z" fill="#bbb" />
            <path d="M871 970l2-4 9-2M875 970v-3h7v3" />
            <path
              d="M899 982l-5-7q0-2 2-1l2 2-2-7q1-2 2.300 0l2 4-.3-6q1-1.500 2.200 0l.8 6 1-6q1.500-1 2 .5l-.5 7 2-4q2-.5 1.500 1.500l-1.500 7-1.500 4z"
              fill="#fff"
            />
            <circle cx="926" cy="972" r="4.500" fill="#dbe7f0" />
            <path d="M929 976l5 6" strokeWidth="2.500" />
            <path d="M932 968h5M934.500 965.500v5M932 973h5" />
            <path d="M947 965.500h16v16" strokeDasharray="2 2" stroke="#777" />
            <circle cx="953.500" cy="972" r="6" fill="#dbe7f0" />
            <path d="M957.500 977l4 5" strokeWidth="2.500" />
            <path d="M988.500 966.500h15v11h-15z" fill="#9db9dc" strokeWidth="1.300" />
            <path d="M992 981.500h8M996 978v3" strokeWidth="2" />
            <path d="M1019.500 966.500h15v14h-15zM1022.500 966v15M1025.500 966v15M1028.500 966v15M1031.500 966v15M1019 969.500h15M1019 972.500h15M1019 975.500h15M1019 978h15" stroke="#555" />
            <path d="M1050.500 967.500h14v12h-14z" fill="#8fb3e3" stroke="#34466b" />
            <path d="M1057.500 967.500v12M1050.500 973.500h14" stroke="#34466b" strokeWidth="1.600" />
            <path
              d="M857 971h6l-3 4.500zM968 971h6l-3 4.500zM1006 971h5.500l-2.800 4.500zM1037 971h5.500l-2.800 4.500zM1068 971h5.500l-2.800 4.500z"
              fill="#333"
              stroke="none"
            />
          </svg>
        </NavBar>
        <Warning width="17" height="15" viewBox="0 0 17 15">
          <path d="M8.500 1L16 14H1z" fill="#f6df1e" stroke="#6d6310" strokeLinejoin="round" />
          <path d="M8.500 5v5M8.500 11.300v1.700" stroke="#222" strokeWidth="1.700" />
        </Warning>
      </BottomRow>
    </Viewport>

    <Timeline>
      <ScrollThumb />
      <TimelineBody>
        <Player>
          <svg width="126" height="18" viewBox="0 0 126 18" fill="#444">
            <path d="M11 3h2v13h-2zM23 3v13l-9-6.500zM44 3v13l-9-6.500zM45.500 6h2.500v7h-2.500zM61 2.500v14l11.500-7zM85 6h2.500v7h-2.500zM89 3v13l9-6.500zM111 3v13l9-6.500zM121 3h2v13h-2z" />
          </svg>
        </Player>
        <Track>
          {history.map((name, i) => (
            <Feature key={i} $current={i === history.length - 1}>
              <TimelineGlyph name={name} />
            </Feature>
          ))}
        </Track>
        <SettingsSlot>
          <Gear size={17} color="#9b9b9b" />
        </SettingsSlot>
      </TimelineBody>
    </Timeline>

    <Taskbar>
      <TaskItem $width={48}>
        <svg width="16" height="16" viewBox="0 0 16 16">
          <path d="M0 2.300l6.500-.9v6.100H0zM7.500 1.200L16 0v7.500H7.500zM0 8.500h6.500v6.100L0 13.700zM7.500 8.500H16V16l-8.500-1.200z" fill="#fff" />
        </svg>
      </TaskItem>
      <TaskItem $width={49}>
        <svg width="20" height="14" viewBox="0 0 20 14">
          <path d="M5 1h10v12H5zM3 2H.500v10H3M17 2h2.500v10H17" fill="none" stroke="#fff" />
        </svg>
      </TaskItem>
      {taskIcons.map((icon, i) => (
        <TaskItem key={i} $width={49}>
          <svg width="28" height="28" viewBox="0 0 28 28">
            {icon}
          </svg>
        </TaskItem>
      ))}
      <TaskItem $width={48} $active>
        <FusionLogo size={24} />
      </TaskItem>
      <Tray>
        <svg width="60" height="20" viewBox="1737 1050 60 20" fill="none" stroke="#fff" strokeWidth="1.100">
          <path d="M1738 1064l5-6 5 6" />
          <path d="M1765 1055.500h10v8h-9M1769 1064v4M1765 1068h8M1759.500 1054v5h4v-5zM1761.500 1059v5.500h3" />
          <path d="M1783 1059h2.500l3-3.500v11l-3-3.500h-2.500zM1790.500 1058q2 3 0 6M1793 1056.500q3 4.500 0 9M1795.500 1055q3.500 6 0 12" />
        </svg>
        <Clock>
          <span>8:41 PM</span>
          <span>8/22/2019</span>
        </Clock>
        <svg width="17" height="17" viewBox="0 0 17 17">
          <path d="M.500 1.500h16v11h-5l-3.500 3.500v-3.500H.500z" fill="none" stroke="#fff" strokeWidth="1.200" />
        </svg>
      </Tray>
    </Taskbar>
  </Window>
);

const PanelKnob = ({ sign }) => (
  <Knob width="19" height="12" viewBox="0 0 19 12">
    <circle cx="4.500" cy="6" r="4.500" fill="#222" />
    <path d={sign === '+' ? 'M2 6h5M4.500 3.500v5' : 'M2 6h5'} stroke="#fff" strokeWidth="1.300" />
    <path d="M16.500 0v12" stroke="#888" />
    <path d="M18.500 2v8" stroke="#aaa" />
  </Knob>
);

export default App;

const Window = styled.div`
  width: 1916px;
  height: 1076px;
  display: flex;
  flex-direction: column;
  overflow: hidden;
`;

const TitleBar = styled.header`
  height: 23px;
  flex: none;
  display: flex;
  align-items: center;
  padding: 0 16px 1px 3px;
  background: #fff;
`;

const AppTitle = styled.span`
  margin-left: 6px;
  font: 12px 'Open Sans', sans-serif;
  letter-spacing: -0.32px;
  color: #000;
  white-space: nowrap;
`;

const WindowButtons = styled.div`
  margin-left: auto;
  display: flex;
  gap: 34.5px;
`;

const TabStrip = styled.div`
  height: 31px;
  flex: none;
  display: flex;
  background: #cacaca;
`;

const QuickAccess = styled.div`
  width: 197px;
  flex: none;
`;

const DocumentTab = styled.div`
  width: 1442px;
  margin-top: 4px;
  display: flex;
  align-items: center;
  justify-content: center;
  gap: 5px;
  padding: 1px 6px 0 0;
  position: relative;
  background: #f1f1f1;
  border-radius: 4px 4px 0 0;
  font-size: 12px;
  letter-spacing: -0.05px;
  span {
    margin-right: 12px;
  }
`;

const CloseMark = styled.svg`
  position: absolute;
  right: 7px;
  top: 10px;
`;

const NewTab = styled.div`
  width: 28px;
  margin: 4px 0 0 4px;
  display: flex;
  align-items: center;
  justify-content: center;
  background: #b9b9b9;
  border-radius: 4px 4px 0 0;
`;

const AccountArea = styled.div`
  flex: 1;
  display: flex;
  align-items: center;
  padding: 0 5px 0 12px;
  > svg:nth-child(2) {
    margin-left: 16px;
  }
  > svg:last-child {
    margin-left: auto;
  }
`;

const JobStatus = styled.div`
  display: flex;
  align-items: center;
  gap: 4px;
  margin-left: 17px;
  font-size: 11px;
`;

const UserName = styled.span`
  margin-left: 30px;
  font: 11px 'Liberation Sans', sans-serif;
  letter-spacing: -0.12px;
  color: #222;
`;

const Ribbon = styled.div`
  height: 83px;
  flex: none;
  display: flex;
  background: #f1f1f1;
  border-bottom: 1px solid #d6d6d6;
`;

const WorkspaceButton = styled.div`
  width: 106px;
  height: 62px;
  margin: 11px 1px 0 11px;
  padding-top: 1px;
  display: flex;
  align-items: center;
  justify-content: center;
  gap: 5px;
  border: 2px solid #dedede;
  border-radius: 4px;
  font-weight: 700;
  letter-spacing: -0.15px;
`;

const Caret = styled.i`
  border: 3px solid transparent;
  border-top: 5px solid #333;
  border-bottom: 0;
`;

const RibbonBody = styled.div`
  padding-left: 1px;
`;

const RibbonTabs = styled.div`
  display: flex;
  height: 23px;
  padding-left: 13px;
`;

const RibbonTab = styled.div`
  width: ${(p) => p.$width}px;
  height: 22px;
  padding-top: 6px;
  text-align: center;
  letter-spacing: -0.35px;
  color: ${(p) => (p.$active ? '#1a96d4' : '#333')};
  border-bottom: ${(p) => (p.$active ? '3px solid #1e8fc4' : '0')};
`;

const RibbonGroups = styled.div`
  display: flex;
`;

const RibbonGroup = styled.div`
  width: ${(p) => p.$width}px;
  height: 55px;
  margin-top: 4px;
  border-right: 2px solid #e0e0e0;
  display: flex;
  flex-direction: column;
  align-items: center;
  &:last-child {
    border-right: 0;
  }
`;

const IconRow = styled.div`
  display: flex;
  align-items: center;
  justify-content: center;
  height: 34px;
`;

const IconSlot = styled.div`
  width: 43px;
  display: flex;
  justify-content: center;
`;

const SelectTile = styled.div`
  width: 38px;
  height: 38px;
  background: #0b93d6;
`;

const GroupLabel = styled.div`
  display: flex;
  align-items: center;
  gap: 3px;
  margin-top: 7px;
  line-height: 12px;
  letter-spacing: -0.3px;
`;

const Viewport = styled.main`
  flex: 1;
  position: relative;
  display: flex;
  flex-direction: column;
  justify-content: space-between;
  padding: 4px 0 0 4px;
  background: #fff;
`;

const JetCanvas = styled.svg`
  position: absolute;
  left: 231px;
  top: 253px;
`;

const TopRow = styled.div`
  display: flex;
  justify-content: space-between;
  position: relative;
`;

const ViewCube = styled.svg`
  margin: 11px 24px 0 0;
`;

const PanelHeader = styled.div`
  width: 300px;
  height: 25px;
  display: flex;
  align-items: center;
  padding: 0 1px 0 5px;
  background: #f1f1f1;
  border: 1px solid #d0d0d0;
  border-bottom-color: #b5b5b5;
`;

const PanelTitle = styled.span`
  margin-left: ${(p) => p.$indent || 8}px;
  letter-spacing: ${(p) => p.$spacing};
  color: #555;
`;

const Knob = styled.svg`
  margin-left: auto;
`;

const Tree = styled.div`
  padding-top: 3px;
  font: 11px 'Liberation Sans', sans-serif;
  letter-spacing: -0.18px;
  color: #222;
`;

const RootRow = styled.div`
  height: 24px;
  display: flex;
  align-items: center;
  padding-left: 16px;
`;

const RootBody = styled.div`
  width: 172px;
  height: 20px;
  margin-left: 7px;
  padding-left: 4px;
  display: flex;
  align-items: center;
  background: #f1f1f1;
  > svg:last-child {
    margin-left: 4px;
  }
`;

const RootName = styled.div`
  width: 122px;
  height: 16px;
  margin-left: 6px;
  display: flex;
  align-items: center;
  padding-left: 3px;
  background: #979797;
  color: #fff;
  font-weight: bold;
  letter-spacing: 0.18px;
  span {
    margin-left: 14px;
  }
`;

const TreeRow = styled.div`
  height: 24px;
  display: flex;
  align-items: center;
  padding-left: 36px;
`;

const TreeItem = styled.div`
  width: ${(p) => p.$width}px;
  height: 20px;
  margin-left: 8px;
  padding-left: 3px;
  display: flex;
  align-items: center;
  background: #f1f1f1;
  white-space: nowrap;
`;

const EyeSlot = styled.div`
  width: 25px;
`;

const ItemIcon = styled.div`
  width: 30px;
`;

const BottomRow = styled.div`
  display: flex;
  align-items: flex-end;
  height: 26px;
  position: relative;
  border-bottom: 1px solid #eee;
`;

const NavBar = styled.div`
  width: 253px;
  height: 23px;
  margin-left: 529px;
  background: #f1f1f1;
`;

const Warning = styled.svg`
  margin: 0 5px 3px auto;
`;

const Timeline = styled.div`
  height: 50px;
  flex: none;
  margin-top: 4px;
  border-top: 2px solid #c8c8c8;
  background: #f1f1f1;
`;

const ScrollThumb = styled.div`
  width: 868px;
  height: 6px;
  margin-left: 4px;
  background: #c8c8c8;
  border-radius: 0 0 4px 4px;
`;

const TimelineBody = styled.div`
  display: flex;
`;

const Player = styled.div`
  width: 142px;
  padding-top: 13px;
`;

const Track = styled.div`
  display: flex;
  height: 36px;
  width: 1728px;
  padding-top: 5px;
  background: linear-gradient(#c8c8c8, #c8c8c8) 12px 100% / 1712px 2px no-repeat;
`;

const Feature = styled.div`
  width: 24px;
  height: 29px;
  padding: 2px;
  background: ${(p) =>
    p.$current
      ? 'linear-gradient(#bbb, #bbb) 12px 100% / 1px 5px no-repeat, linear-gradient(#e9ea2c, #e9ea2c) 0 0 / 24px 24px no-repeat'
      : 'linear-gradient(#bbb, #bbb) 12px 100% / 1px 5px no-repeat'};
`;

const SettingsSlot = styled.div`
  margin: 13px 0 0 20px;
`;

const Taskbar = styled.footer`
  height: 36px;
  flex: none;
  display: flex;
  background: #111;
`;

const TaskItem = styled.div`
  width: ${(p) => p.$width}px;
  height: 36px;
  padding-top: 3px;
  display: flex;
  align-items: center;
  justify-content: center;
  background: ${(p) => (p.$active ? '#3b3b3b' : 'transparent')};
`;

const Tray = styled.div`
  margin-left: auto;
  display: flex;
  align-items: center;
  padding: 3px 20px 0 0;
`;

const Clock = styled.div`
  width: 82px;
  padding-right: 6px;
  display: flex;
  flex-direction: column;
  align-items: center;
  font: 12px/17px 'Open Sans', sans-serif;
  letter-spacing: -0.55px;
  color: #fff;
`;
